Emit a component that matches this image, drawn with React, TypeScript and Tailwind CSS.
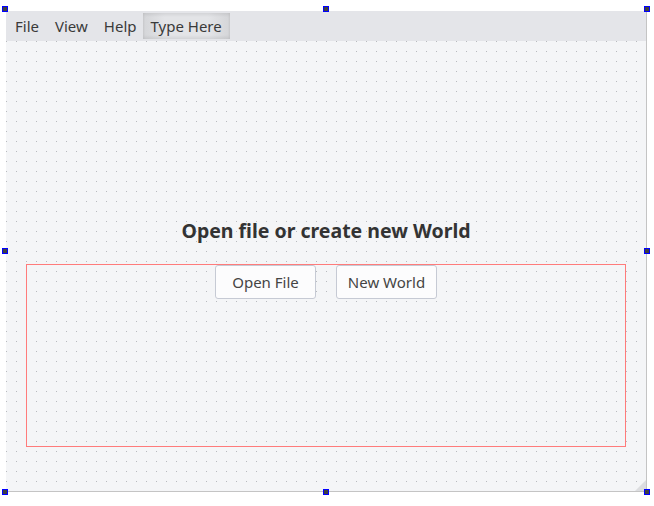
import React from "react";

const handles = [
  "left-[2px] top-[6px]",
  "left-[323px] top-[6px]",
  "left-[644px] top-[6px]",
  "left-[2px] top-[248px]",
  "left-[644px] top-[248px]",
  "left-[2px] top-[489px]",
  "left-[323px] top-[489px]",
  "left-[644px] top-[489px]",
];

const menus = ["File", "View", "Help"];

export default function App() {
  return (
    <div className="relative h-[506px] w-[654px] overflow-hidden bg-white font-['Noto_Sans',sans-serif] text-[#333]">
      <div className="ml-[6px] mt-[11px] flex h-[481px] w-[641px] flex-col border-b border-r border-[#c4c4c4]">
        <nav className="flex h-[30px] items-center bg-[#e4e5e9] pl-[1px] text-[15px] text-[#3a3a3a]">
          {menus.map((m) => (
            <span key={m} className="px-2">
              {m}
            </span>
          ))}
          <span className="ml-[-2px] flex h-[26px] items-center bg-[linear-gradient(to_right,#d4d5d8,#e3e4e7_25%,#e3e4e7_75%,#d4d5d8)] px-2 shadow-[inset_0_2px_3px_rgba(0,0,0,0.07),inset_0_-2px_3px_rgba(0,0,0,0.07)]">
            Type Here
          </span>
        </nav>
        <main className="relative flex flex-1 flex-col items-center bg-[#f4f5f7] bg-[radial-gradient(circle_at_0.5px_0.5px,#b8babe_0.6px,transparent_0.9px)] bg-size-[10px_10px]">
          <h1 className="mt-[174px] text-[19.5px] font-bold leading-[32px] text-[#333]">
            Open file or create new World
          </h1>
          <div className="mt-[17px] flex h-[183px] w-[600px] justify-center gap-5 border border-[#ff7b7b]">
            <button className="h-[34px] w-[101px] rounded-[3px] border border-[#c6cad4] bg-[#fcfcfd] text-[15px] text-[#444]">
              Open File
            </button>
            <button className="h-[34px] w-[101px] rounded-[3px] border border-[#c6cad4] bg-[#fcfcfd] text-[15px] text-[#444]">
              New World
            </button>
          </div>
          <svg className="absolute bottom-0 right-0" width="11" height="11" viewBox="0 0 11 11">
            <polygon points="11,0 11,11 0,11" fill="#dcdde0" />
          </svg>
        </main>
      </div>
      {handles.map((h) => (
        <div key={h} className={`absolute h-[6px] w-[6px] border border-[#0000ff] bg-[#404040] ${h}`} />
      ))}
    </div>
  );
}
